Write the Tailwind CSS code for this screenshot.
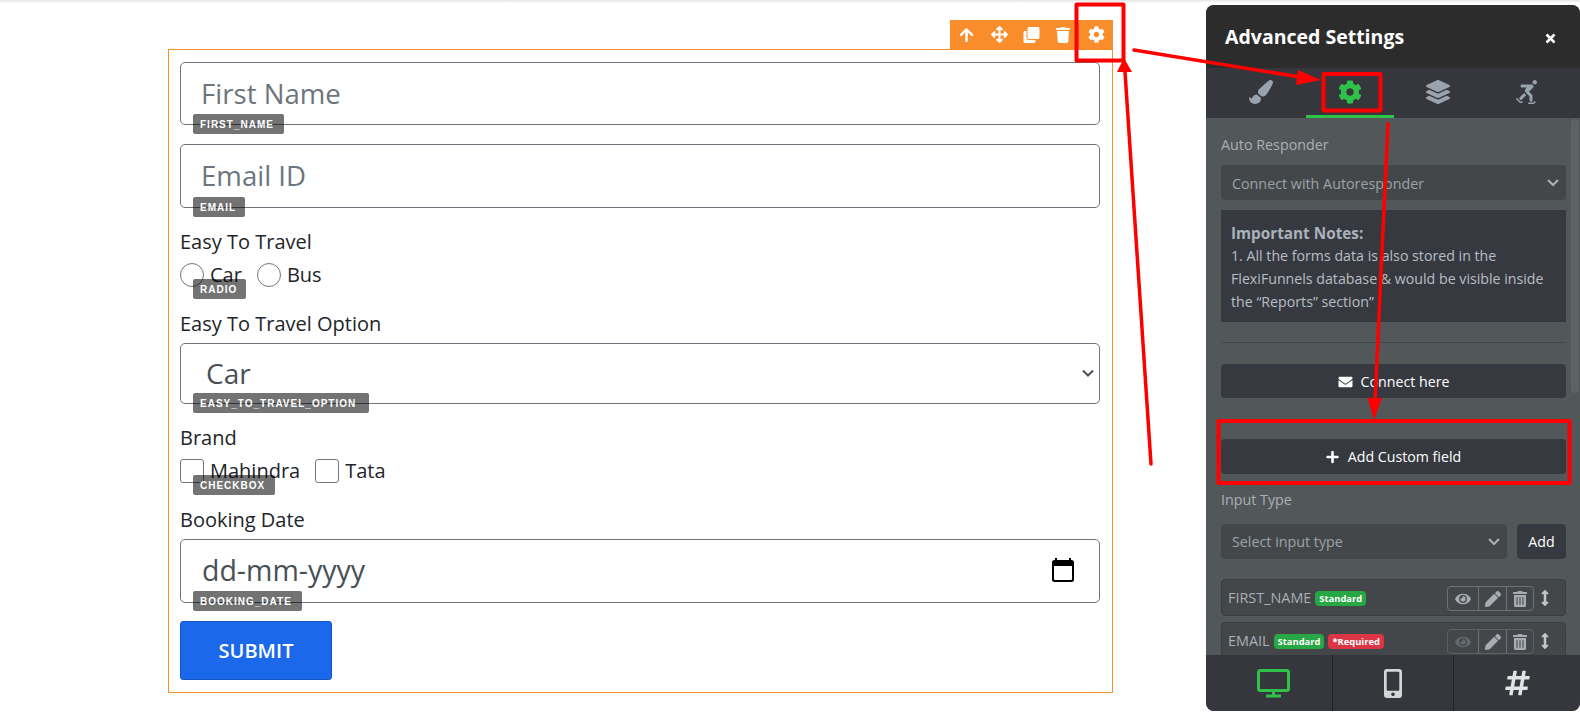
<!DOCTYPE html>
<html lang="en">
  <head>
    <meta charset="UTF-8" />
    <title>Advanced Settings - Form</title>
    <script src="https://cdn.jsdelivr.net/npm/@tailwindcss/browser@4"></script>
  </head>
  <body class="relative h-[718px] w-[1580px] overflow-hidden bg-white font-['Open_Sans',sans-serif] text-[#212529]">
    <div class="h-[3px] bg-gradient-to-b from-[#e4e4e4] to-white"></div>

    <!-- Form block -->
    <main class="ml-[168px] mt-[17px] w-[945px]">
      <div class="ml-auto flex h-[29px] w-[163px] items-center bg-[#f98c2b] text-white">
        <span class="flex w-[33px] justify-center"><svg class="h-[16px] w-[15px] fill-current" viewBox="0 0 448 512"><path d="M34.9 289.5l-22.2-22.2c-9.4-9.4-9.4-24.6 0-33.9L207 39c9.4-9.4 24.6-9.4 33.9 0l194.3 194.3c9.4 9.4 9.4 24.6 0 33.9L413 289.4c-9.5 9.5-25 9.3-34.3-.4L264 168.6V456c0 13.3-10.7 24-24 24h-32c-13.3 0-24-10.7-24-24V168.6L69.2 289.1c-9.3 9.8-24.8 10-34.3.4z"/></svg></span>
        <span class="flex w-[33px] justify-center"><svg class="h-[17px] w-[17px] fill-current" viewBox="0 0 512 512"><path d="M352.201 425.775l-79.196 79.196c-9.373 9.373-24.568 9.373-33.941 0l-79.196-79.196c-15.119-15.119-4.411-40.971 16.971-40.97h51.162L228 284H127.196v51.162c0 21.382-25.851 32.09-40.971 16.971L7.029 272.937c-9.373-9.373-9.373-24.569 0-33.941L86.225 159.8c15.119-15.119 40.971-4.411 40.971 16.971V228H228V127.196h-51.23c-21.382 0-32.09-25.851-16.971-40.971l79.196-79.196c9.373-9.373 24.568-9.373 33.941 0l79.196 79.196c15.119 15.119 4.411 40.971-16.971 40.971h-51.162V228h100.804v-51.162c0-21.382 25.851-32.09 40.97-16.971l79.196 79.196c9.373 9.373 9.373 24.569 0 33.941L425.773 352.2c-15.119 15.119-40.971 4.411-40.97-16.971V284H284v100.804h51.23c21.382 0 32.09 25.851 16.971 40.971z"/></svg></span>
        <span class="flex w-[31px] justify-center"><svg class="h-[16px] w-[17px] fill-current" viewBox="0 0 512 512"><path d="M464 0c26.51 0 48 21.49 48 48v288c0 26.51-21.49 48-48 48H176c-26.51 0-48-21.49-48-48V48c0-26.51 21.49-48 48-48h288M176 416c-44.112 0-80-35.888-80-80V128H48c-26.51 0-48 21.49-48 48v288c0 26.51 21.49 48 48 48h288c26.51 0 48-21.49 48-48v-48H176z"/></svg></span>
        <span class="flex w-[32px] justify-center"><svg class="h-[16px] w-[14px] fill-current" viewBox="0 0 448 512"><path d="M432 32H312l-9.4-18.7A24 24 0 0 0 281.1 0H166.8a23.72 23.72 0 0 0-21.4 13.3L136 32H16A16 16 0 0 0 0 48v32a16 16 0 0 0 16 16h416a16 16 0 0 0 16-16V48a16 16 0 0 0-16-16zM53.2 467a48 48 0 0 0 47.9 45h245.8a48 48 0 0 0 47.9-45L416 128H32z"/></svg></span>
        <span class="flex w-[34px] justify-center"><svg class="h-[17px] w-[17px] fill-current" viewBox="0 0 512 512"><path d="M487.4 315.7l-42.6-24.6c4.3-23.2 4.3-47 0-70.2l42.6-24.6c4.9-2.8 7.1-8.6 5.5-14-11.1-35.6-30-67.8-54.7-94.6-3.8-4.1-10-5.1-14.8-2.3L380.8 110c-17.9-15.4-38.5-27.3-60.8-35.1V25.8c0-5.6-3.9-10.5-9.4-11.7-36.7-8.2-74.3-7.8-109.2 0-5.5 1.2-9.4 6.1-9.4 11.7V75c-22.2 7.9-42.8 19.8-60.8 35.1L88.7 85.5c-4.9-2.8-11-1.9-14.8 2.3-24.7 26.7-43.6 58.9-54.7 94.6-1.7 5.4.6 11.2 5.5 14L67.3 221c-4.3 23.2-4.3 47 0 70.2l-42.6 24.6c-4.9 2.8-7.1 8.6-5.5 14 11.1 35.6 30 67.8 54.7 94.6 3.8 4.1 10 5.1 14.8 2.3l42.6-24.6c17.9 15.4 38.5 27.3 60.8 35.1v49.2c0 5.6 3.9 10.5 9.4 11.7 36.7 8.2 74.3 7.8 109.2 0 5.5-1.2 9.4-6.1 9.4-11.7v-49.2c22.2-7.9 42.8-19.8 60.8-35.1l42.6 24.6c4.9 2.8 11 1.9 14.8-2.3 24.7-26.7 43.6-58.9 54.7-94.6 1.5-5.5-.7-11.3-5.6-14.1zM256 336c-44.1 0-80-35.9-80-80s35.9-80 80-80 80 35.9 80 80-35.9 80-80 80z"/></svg></span>
      </div>

      <form class="h-[644px] border border-[#f98c2b] pl-[11px] pr-[12px] pt-[12px]">
        <div class="relative">
          <input type="text" placeholder="First Name" class="block h-[63px] w-full rounded-[5px] border border-[#6c757d] pb-[2px] pl-[20px] pr-[21px] text-[27.6px] placeholder:text-[#6c757d]" />
          <span class="absolute left-[13px] top-[52px] flex h-[20px] w-[91px] items-center rounded-[2px] bg-black/55 pl-[7px] font-['Liberation_Sans',sans-serif] text-[10px] font-bold tracking-[1px] text-white">FIRST_NAME</span>
        </div>

        <div class="relative mt-[19px]">
          <input type="text" placeholder="Email ID" class="block h-[64px] w-full rounded-[5px] border border-[#6c757d] pb-[2px] pl-[20px] pr-[21px] text-[27.6px] placeholder:text-[#6c757d]" />
          <span class="absolute left-[13px] top-[53px] flex h-[20px] w-[52px] items-center rounded-[2px] bg-black/55 pl-[7px] font-['Liberation_Sans',sans-serif] text-[10px] font-bold tracking-[1px] text-white">EMAIL</span>
        </div>

        <p class="mt-[20px] h-[27px] text-[20px] leading-[27px]">Easy To Travel</p>
        <div class="relative mt-[8px] flex h-[24px] items-center text-[20px]">
          <span class="h-[24px] w-[24px] rounded-full border border-[#767676]"></span>
          <span class="ml-[6px]">Car</span>
          <span class="ml-[15px] h-[24px] w-[24px] rounded-full border border-[#767676]"></span>
          <span class="ml-[6px]">Bus</span>
          <span class="absolute left-[13px] top-[16px] flex h-[20px] w-[53px] items-center rounded-[2px] bg-black/55 pl-[7px] font-['Liberation_Sans',sans-serif] text-[10px] font-bold tracking-[1px] text-white">RADIO</span>
        </div>

        <p class="mt-[23px] h-[27px] text-[20px] leading-[27px]">Easy To Travel Option</p>
        <div class="relative mt-[6px]">
          <select class="block h-[61px] w-full appearance-none rounded-[5px] border border-[#6c757d] bg-white px-[25px] pb-[2px] text-[28px] text-[#495057]">
            <option>Car</option>
          </select>
          <svg class="absolute right-[6px] top-[25px] h-[10px] w-[12px] fill-none stroke-[#495057] stroke-2" viewBox="0 0 12 10"><path d="M1 2.5l5 5 5-5"/></svg>
          <span class="absolute left-[13px] top-[50px] flex h-[20px] w-[176px] items-center rounded-[2px] bg-black/55 pl-[7px] font-['Liberation_Sans',sans-serif] text-[10px] font-bold tracking-[1px] text-white">EASY_TO_TRAVEL_OPTION</span>
        </div>

        <p class="mt-[20px] h-[27px] text-[20px] leading-[27px]">Brand</p>
        <div class="relative mt-[8px] flex h-[24px] items-center text-[20px]">
          <span class="h-[24px] w-[24px] rounded-[3px] border border-[#767676]"></span>
          <span class="ml-[6px]">Mahindra</span>
          <span class="ml-[15px] h-[24px] w-[24px] rounded-[3px] border border-[#767676]"></span>
          <span class="ml-[6px]">Tata</span>
          <span class="absolute left-[13px] top-[16px] flex h-[20px] w-[82px] items-center rounded-[2px] bg-black/55 pl-[7px] font-['Liberation_Sans',sans-serif] text-[10px] font-bold tracking-[1px] text-white">CHECKBOX</span>
        </div>

        <p class="mt-[23px] h-[27px] text-[20px] leading-[27px]">Booking Date</p>
        <div class="relative mt-[6px]">
          <input type="text" value="dd-mm-yyyy" class="block h-[64px] w-full rounded-[5px] border border-[#6c757d] pb-[2px] pl-[21px] pr-[22px] text-[28.5px] text-[#495057]" />
          <svg class="absolute right-[26px] top-[19px] h-[24px] w-[22px] fill-black" viewBox="0 0 22 24"><path d="M5 0v2h12V0h2v2h.5A2.5 2.5 0 0 1 22 4.5v17a2.5 2.5 0 0 1-2.5 2.5h-17A2.5 2.5 0 0 1 0 21.5v-17A2.5 2.5 0 0 1 2.5 2H3V0zM2 8v13a1 1 0 0 0 1 1h16a1 1 0 0 0 1-1V8z"/></svg>
          <span class="absolute left-[13px] top-[52px] flex h-[20px] w-[109px] items-center rounded-[2px] bg-black/55 pl-[7px] font-['Liberation_Sans',sans-serif] text-[10px] font-bold tracking-[1px] text-white">BOOKING_DATE</span>
        </div>

        <button type="button" class="mt-[18px] h-[59px] w-[152px] rounded-[3px] border border-[#1558c4] bg-[#1b68ea] text-[20px] font-semibold text-white">SUBMIT</button>
      </form>
    </main>

    <!-- Advanced settings panel -->
    <aside class="absolute left-[1206px] top-[5px] flex h-[706px] w-[374px] flex-col overflow-hidden rounded-[8px] bg-[#52575a]">
      <header class="flex h-[63px] shrink-0 items-center justify-between bg-[#2c2c2c] pl-[19px] pr-[24px] text-white">
        <h2 class="pt-[1px] text-[19.5px] font-bold">Advanced Settings</h2>
        <svg class="mt-[4px] h-[11px] w-[11px] fill-none stroke-white stroke-[2.6]" viewBox="0 0 11 11"><path d="M1.5 1.5l8 8M9.5 1.5l-8 8"/></svg>
      </header>
      <nav class="flex h-[50px] shrink-0 bg-[#35373c]">
        <span class="flex w-[100px] items-center justify-center pb-[2px] pl-[10px]"><svg class="h-[24px] w-[24px] fill-[#9aa3ad]" viewBox="0 0 512 512"><path d="M167.02 309.34c-40.12 2.58-76.53 17.86-97.19 72.3-2.35 6.21-8 9.98-14.59 9.98-11.11 0-45.46-27.67-55.25-34.35C0 439.62 37.93 512 128 512c75.86 0 128-43.77 128-120.19 0-3.11-.65-6.08-.97-9.13l-88.01-73.34zM457.89 0c-15.16 0-29.37 6.71-40.21 16.45C213.27 199.05 192 203.34 192 257.09c0 13.7 3.25 26.76 8.73 38.7l63.82 53.18c7.21 1.8 14.64 3.03 22.39 3.03 62.11 0 98.11-45.47 211.16-256.46 7.38-14.35 13.9-29.85 13.9-45.99C512 20.64 486 0 457.89 0z"/></svg></span>
        <span class="flex h-[50px] w-[88px] items-center justify-center border-b-[3px] border-[#2fc14a]"><svg class="h-[24px] w-[24px] fill-[#2fc14a]" viewBox="0 0 512 512"><path d="M487.4 315.7l-42.6-24.6c4.3-23.2 4.3-47 0-70.2l42.6-24.6c4.9-2.8 7.1-8.6 5.5-14-11.1-35.6-30-67.8-54.7-94.6-3.8-4.1-10-5.1-14.8-2.3L380.8 110c-17.9-15.4-38.5-27.3-60.8-35.1V25.8c0-5.6-3.9-10.5-9.4-11.7-36.7-8.2-74.3-7.8-109.2 0-5.5 1.2-9.4 6.1-9.4 11.7V75c-22.2 7.9-42.8 19.8-60.8 35.1L88.7 85.5c-4.9-2.8-11-1.9-14.8 2.3-24.7 26.7-43.6 58.9-54.7 94.6-1.7 5.4.6 11.2 5.5 14L67.3 221c-4.3 23.2-4.3 47 0 70.2l-42.6 24.6c-4.9 2.8-7.1 8.6-5.5 14 11.1 35.6 30 67.8 54.7 94.6 3.8 4.1 10 5.1 14.8 2.3l42.6-24.6c17.9 15.4 38.5 27.3 60.8 35.1v49.2c0 5.6 3.9 10.5 9.4 11.7 36.7 8.2 74.3 7.8 109.2 0 5.5-1.2 9.4-6.1 9.4-11.7v-49.2c22.2-7.9 42.8-19.8 60.8-35.1l42.6 24.6c4.9 2.8 11 1.9 14.8-2.3 24.7-26.7 43.6-58.9 54.7-94.6 1.5-5.5-.7-11.3-5.6-14.1zM256 336c-44.1 0-80-35.9-80-80s35.9-80 80-80 80 35.9 80 80-35.9 80-80 80z"/></svg></span>
        <span class="flex w-[88px] items-center justify-center pb-[2px]"><svg class="h-[24px] w-[24px] fill-[#9aa3ad]" viewBox="0 0 512 512"><path d="M12.41 148.02l232.94 105.67c6.8 3.09 14.49 3.09 21.29 0l232.94-105.67c16.55-7.51 16.55-32.52 0-40.03L266.65 2.31a25.607 25.607 0 0 0-21.29 0L12.41 107.98c-16.55 7.51-16.55 32.53 0 40.04zm487.18 88.28l-58.09-26.33-161.64 73.27c-7.56 3.43-15.59 5.17-23.86 5.17s-16.29-1.74-23.86-5.17L70.51 209.97l-58.1 26.33c-16.55 7.5-16.55 32.5 0 40l232.94 105.59c6.8 3.08 14.49 3.08 21.29 0L499.59 276.3c16.55-7.5 16.55-32.5 0-40zm0 127.8l-57.87-26.23-161.86 73.37c-7.56 3.43-15.59 5.17-23.86 5.17s-16.29-1.74-23.86-5.17L70.29 337.87 12.41 364.1c-16.55 7.5-16.55 32.5 0 40l232.94 105.59c6.8 3.08 14.49 3.08 21.29 0L499.59 404.1c16.55-7.5 16.55-32.5 0-40z"/></svg></span>
        <span class="flex w-[88px] items-center justify-center pb-[2px]"><svg class="h-[24px] w-[21px] fill-[#9aa3ad]" viewBox="0 0 448 512"><path d="M400 0c-26.5 0-48 21.5-48 48s21.5 48 48 48 48-21.5 48-48-21.5-48-48-48zm0 448c-8.8 0-16 7.2-16 16s-7.2 16-16 16h-96c-8.8 0-16 7.2-16 16s7.2 16 16 16h96c26.5 0 48-21.5 48-48 0-8.8-7.2-16-16-16zm-282.2 8.6c-6.2 6.2-16.4 6.3-22.6 0l-67.9-67.9c-6.2-6.2-16.4-6.2-22.6 0s-6.2 16.4 0 22.6l67.9 67.9c9.4 9.4 21.7 14 34 14s24.6-4.7 33.9-14c6.2-6.2 6.2-16.4 0-22.6-6.3-6.2-16.4-6.2-22.7 0zm56.1-179.8l-93.7 93.7c-12.5 12.5-12.5 32.8 0 45.2 6.2 6.2 14.4 9.4 22.6 9.4s16.4-3.1 22.6-9.4l91.9-91.9-30.2-30.2c-5-5-9.4-10.7-13.2-16.8zM128 160h105.5l-20.1 17.2c-13.5 11.5-21.6 28.4-22.3 46.1-.7 17.8 6.1 35.2 18.7 47.7l78.2 78.2V432c0 17.7 14.3 32 32 32s32-14.3 32-32v-89.4c0-12.6-5.1-25-14.1-33.9l-61-61c.5-.4 1.2-.6 1.7-1.1l82.3-82.3c11.5-11.5 14.9-28.6 8.7-43.6-6.2-15-20.7-24.7-37-24.7H128c-17.7 0-32 14.3-32 32s14.3 32 32 32z"/></svg></span>
      </nav>

      <div class="relative min-h-0 flex-1 overflow-hidden pl-[15px] pr-[14px]">
        <div class="absolute right-[1px] top-[1px] h-[274px] w-[8px] rounded-[4px] bg-[#5d6265]"></div>
        <p class="mt-[16px] h-[21px] text-[14.3px] leading-[21px] text-[#aab0b5]">Auto Responder</p>
        <div class="relative mt-[10px]">
          <select class="block h-[35px] w-full appearance-none rounded-[4px] bg-[#43474a] px-[11px] pt-[2px] text-[14.3px] text-[#9ca3a8]">
            <option>Connect with Autoresponder</option>
          </select>
          <svg class="absolute right-[7px] top-[13px] h-[9px] w-[12px] fill-none stroke-[#aab0b5] stroke-2" viewBox="0 0 12 9"><path d="M1 2l5 5 5-5"/></svg>
        </div>
        <div class="mt-[10px] h-[112px] bg-[#363940] pl-[10px] pr-[8px] pt-[13px] text-[14.2px] leading-[23px] text-[#b9bec4]">
          <strong class="block h-[21px] text-[15.3px] font-bold leading-[21px] text-[#aab2ba]">Important Notes:</strong>
          1. All the forms data is also stored in the<br />
          FlexiFunnels database &amp; would be visible inside<br />
          the “Reports” section”
        </div>
        <div class="mt-[20px] border-t border-[#44484c]"></div>
        <button type="button" class="mt-[21px] flex h-[34px] w-full items-center justify-center gap-[8px] rounded-[4px] bg-[#363940] pt-[1px] text-[14.2px] text-white">
          <svg class="h-[14px] w-[15px] fill-white" viewBox="0 0 512 512"><path d="M502.3 190.8c3.9-3.1 9.7-.2 9.7 4.7V400c0 26.5-21.5 48-48 48H48c-26.5 0-48-21.5-48-48V195.6c0-5 5.7-7.8 9.7-4.7 22.4 17.4 52.1 39.5 154.1 113.6 21.1 15.4 56.7 47.8 92.2 47.6 35.7.3 72-32.8 92.3-47.6 102-74.1 131.6-96.3 154-113.7zM256 320c23.2.4 56.6-29.2 73.4-41.4 132.7-96.3 142.8-104.7 173.4-128.7 5.8-4.5 9.2-11.5 9.2-18.9v-19c0-26.5-21.5-48-48-48H48C21.5 64 0 85.5 0 112v19c0 7.4 3.4 14.3 9.2 18.9 30.6 23.9 40.7 32.4 173.4 128.7 16.8 12.2 50.2 41.8 73.4 41.4z"/></svg>
          Connect here
        </button>
        <button type="button" class="mt-[41px] flex h-[35px] w-full items-center justify-center gap-[9px] rounded-[4px] bg-[#363940] text-[14.2px] text-white">
          <svg class="h-[14px] w-[13px] fill-white" viewBox="0 0 448 512"><path d="M416 208H272V64c0-17.67-14.33-32-32-32h-32c-17.67 0-32 14.33-32 32v144H32c-17.67 0-32 14.33-32 32v32c0 17.67 14.33 32 32 32h144v144c0 17.67 14.33 32 32 32h32c17.67 0 32-14.33 32-32V304h144c17.67 0 32-14.33 32-32v-32c0-17.67-14.33-32-32-32z"/></svg>
          Add Custom field
        </button>
        <p class="mt-[15px] h-[21px] text-[14.3px] leading-[21px] text-[#aab0b5]">Input Type</p>
        <div class="mt-[14px] flex gap-[10px]">
          <div class="relative flex-1">
            <select class="block h-[35px] w-full appearance-none rounded-[4px] bg-[#43474a] px-[11px] text-[14.3px] text-[#9ca3a8]">
              <option>Select input type</option>
            </select>
            <svg class="absolute right-[7px] top-[13px] h-[9px] w-[12px] fill-none stroke-[#aab0b5] stroke-2" viewBox="0 0 12 9"><path d="M1 2l5 5 5-5"/></svg>
          </div>
          <button type="button" class="h-[35px] w-[49px] rounded-[4px] bg-[#363940] text-[14.2px] text-white">Add</button>
        </div>

        <div class="mt-[20px] flex h-[37px] items-center rounded-[4px] border border-[#393c40] bg-[#43474a] pl-[6px] pr-[16px] text-[14.4px] text-[#aab0b5]">
          <span>FIRST_NAME</span>
          <span class="ml-[4px] mt-[2px] rounded-[4px] bg-[#28a745] px-[4px] text-[9.4px] font-bold leading-[15px] text-white">Standard</span>
          <span class="ml-auto mt-[2px] flex h-[25px] items-stretch rounded-[4px] border border-[#6c7277]">
            <span class="flex w-[30px] items-center justify-center"><svg class="h-[14px] w-[18px] fill-[#a7adb2]" viewBox="0 0 576 512"><path d="M572.52 241.4C518.29 135.59 410.93 64 288 64S57.68 135.64 3.48 241.41a32.35 32.35 0 0 0 0 29.19C57.71 376.41 165.07 448 288 448s230.32-71.64 284.52-177.41a32.35 32.35 0 0 0 0-29.19zM288 400a144 144 0 1 1 144-144 143.93 143.93 0 0 1-144 144zm0-240a95.31 95.31 0 0 0-25.31 3.79 47.85 47.85 0 0 1-66.9 66.9A95.78 95.78 0 1 0 288 160z"/></svg></span>
            <span class="flex w-[28px] items-center justify-center border-l border-[#6c7277]"><svg class="h-[16px] w-[16px] fill-[#a7adb2]" viewBox="0 0 512 512"><path d="M497.9 142.1l-46.1 46.1c-4.7 4.7-12.3 4.7-17 0l-111-111c-4.7-4.7-4.7-12.3 0-17l46.1-46.1c18.7-18.7 49.1-18.7 67.9 0l60.1 60.1c18.8 18.7 18.8 49.1 0 67.9zM284.2 99.8L21.6 362.4.4 483.9c-2.9 16.4 11.4 30.6 27.8 27.8l121.5-21.3 262.6-262.6c4.7-4.7 4.7-12.3 0-17l-111-111c-4.8-4.7-12.4-4.7-17.1 0z"/></svg></span>
            <span class="flex w-[27px] items-center justify-center border-l border-[#6c7277]"><svg class="h-[16px] w-[14px] fill-[#a7adb2]" viewBox="0 0 448 512"><path d="M32 464a48 48 0 0 0 48 48h288a48 48 0 0 0 48-48V128H32zm272-256a16 16 0 0 1 32 0v224a16 16 0 0 1-32 0zm-96 0a16 16 0 0 1 32 0v224a16 16 0 0 1-32 0zm-96 0a16 16 0 0 1 32 0v224a16 16 0 0 1-32 0zM432 32H312l-9.4-18.7A24 24 0 0 0 281.1 0H166.8a23.72 23.72 0 0 0-21.4 13.3L136 32H16A16 16 0 0 0 0 48v32a16 16 0 0 0 16 16h416a16 16 0 0 0 16-16V48a16 16 0 0 0-16-16z"/></svg></span>
          </span>
          <svg class="ml-[7px] h-[16px] w-[8px] fill-[#c0c5c9]" viewBox="0 0 256 512"><path d="M214.059 377.941H168V134.059h46.059c21.382 0 32.09-25.851 16.971-40.971L144.971 7.029c-9.373-9.373-24.569-9.373-33.941 0L24.971 93.088c-15.119 15.119-4.411 40.971 16.971 40.971H88v243.882H41.941c-21.382 0-32.09 25.851-16.971 40.971l86.059 86.059c9.373 9.373 24.569 9.373 33.941 0l86.059-86.059c15.12-15.119 4.412-40.971-16.97-40.971z"/></svg>
        </div>
        <div class="mt-[6px] flex h-[37px] items-center rounded-[4px] border border-[#393c40] bg-[#43474a] pl-[6px] pr-[16px] text-[14.4px] text-[#aab0b5]">
          <span>EMAIL</span>
          <span class="ml-[4px] mt-[2px] rounded-[4px] bg-[#28a745] px-[4px] text-[9.4px] font-bold leading-[15px] text-white">Standard</span>
          <span class="ml-[4px] mt-[2px] rounded-[4px] bg-[#dc3545] px-[4px] text-[9.4px] font-bold leading-[15px] text-white">*Required</span>
          <span class="ml-auto mt-[2px] flex h-[25px] items-stretch rounded-[4px] border border-[#5b6064]">
            <span class="flex w-[30px] items-center justify-center"><svg class="h-[14px] w-[18px] fill-[#666b6f]" viewBox="0 0 576 512"><path d="M572.52 241.4C518.29 135.59 410.93 64 288 64S57.68 135.64 3.48 241.41a32.35 32.35 0 0 0 0 29.19C57.71 376.41 165.07 448 288 448s230.32-71.64 284.52-177.41a32.35 32.35 0 0 0 0-29.19zM288 400a144 144 0 1 1 144-144 143.93 143.93 0 0 1-144 144zm0-240a95.31 95.31 0 0 0-25.31 3.79 47.85 47.85 0 0 1-66.9 66.9A95.78 95.78 0 1 0 288 160z"/></svg></span>
            <span class="flex w-[28px] items-center justify-center border-l border-[#6c7277]"><svg class="h-[16px] w-[16px] fill-[#a7adb2]" viewBox="0 0 512 512"><path d="M497.9 142.1l-46.1 46.1c-4.7 4.7-12.3 4.7-17 0l-111-111c-4.7-4.7-4.7-12.3 0-17l46.1-46.1c18.7-18.7 49.1-18.7 67.9 0l60.1 60.1c18.8 18.7 18.8 49.1 0 67.9zM284.2 99.8L21.6 362.4.4 483.9c-2.9 16.4 11.4 30.6 27.8 27.8l121.5-21.3 262.6-262.6c4.7-4.7 4.7-12.3 0-17l-111-111c-4.8-4.7-12.4-4.7-17.1 0z"/></svg></span>
            <span class="flex w-[27px] items-center justify-center border-l border-[#6c7277]"><svg class="h-[16px] w-[14px] fill-[#a7adb2]" viewBox="0 0 448 512"><path d="M32 464a48 48 0 0 0 48 48h288a48 48 0 0 0 48-48V128H32zm272-256a16 16 0 0 1 32 0v224a16 16 0 0 1-32 0zm-96 0a16 16 0 0 1 32 0v224a16 16 0 0 1-32 0zm-96 0a16 16 0 0 1 32 0v224a16 16 0 0 1-32 0zM432 32H312l-9.4-18.7A24 24 0 0 0 281.1 0H166.8a23.72 23.72 0 0 0-21.4 13.3L136 32H16A16 16 0 0 0 0 48v32a16 16 0 0 0 16 16h416a16 16 0 0 0 16-16V48a16 16 0 0 0-16-16z"/></svg></span>
          </span>
          <svg class="ml-[7px] h-[16px] w-[8px] fill-[#c0c5c9]" viewBox="0 0 256 512"><path d="M214.059 377.941H168V134.059h46.059c21.382 0 32.09-25.851 16.971-40.971L144.971 7.029c-9.373-9.373-24.569-9.373-33.941 0L24.971 93.088c-15.119 15.119-4.411 40.971 16.971 40.971H88v243.882H41.941c-21.382 0-32.09 25.851-16.971 40.971l86.059 86.059c9.373 9.373 24.569 9.373 33.941 0l86.059-86.059c15.12-15.119 4.412-40.971-16.97-40.971z"/></svg>
        </div>
      </div>

      <footer class="flex h-[56px] shrink-0 bg-[#35373c]">
        <span class="flex w-[126px] items-center justify-center pl-[8px]"><svg class="h-[29px] w-[33px] fill-none stroke-[#2fc14a]" viewBox="0 0 33 29"><rect x="1.5" y="1.5" width="30" height="20" rx="2" stroke-width="3"/><path d="M16.5 22v4M9 27h15" stroke-width="3"/></svg></span>
        <span class="flex w-[121px] items-center justify-center border-l border-[#212226]"><svg class="h-[29px] w-[18px] fill-[#d4d5d6]" viewBox="0 0 320 512"><path d="M272 0H48C21.5 0 0 21.5 0 48v416c0 26.5 21.5 48 48 48h224c26.5 0 48-21.5 48-48V48c0-26.5-21.5-48-48-48zM160 480c-17.7 0-32-14.3-32-32s14.3-32 32-32 32 14.3 32 32-14.3 32-32 32zm112-108c0 6.6-5.4 12-12 12H60c-6.6 0-12-5.4-12-12V60c0-6.6 5.4-12 12-12h200c6.6 0 12 5.4 12 12v312z"/></svg></span>
        <span class="flex flex-1 items-center justify-center border-l border-[#212226]"><svg class="h-[28px] w-[25px] fill-[#e2e3e4]" viewBox="0 0 448 512"><path d="M440.667 182.109l7.143-40c1.313-7.355-4.342-14.109-11.813-14.109h-74.81l14.623-81.891C377.123 38.754 371.468 32 363.997 32h-40.632a12 12 0 0 0-11.813 9.891L296.175 128H197.54l14.623-81.891C213.477 38.754 207.822 32 200.35 32h-40.632a12 12 0 0 0-11.813 9.891L132.528 128H53.432a12 12 0 0 0-11.813 9.891l-7.143 40C33.163 185.246 38.818 192 46.289 192h74.81L98.242 320H19.146a12 12 0 0 0-11.813 9.891l-7.143 40C-1.123 377.246 4.532 384 12.003 384h74.81L72.19 465.891C70.877 473.246 76.532 480 84.003 480h40.632a12 12 0 0 0 11.813-9.891L151.826 384h98.634l-14.623 81.891C234.523 473.246 240.178 480 247.65 480h40.632a12 12 0 0 0 11.813-9.891L315.472 384h79.096a12 12 0 0 0 11.813-9.891l7.143-40c1.313-7.355-4.342-14.109-11.813-14.109h-74.81l22.857-128h79.096a12 12 0 0 0 11.813-9.891zM261.889 320h-98.634l22.857-128h98.634l-22.857 128z"/></svg></span>
      </footer>
    </aside>

    <!-- Red annotations laid over the screenshot -->
    <svg class="pointer-events-none absolute left-0 top-0 h-[718px] w-[1580px]" viewBox="0 0 1580 718">
      <g fill="none" stroke="#ff0000" stroke-width="4" stroke-linejoin="round">
        <rect x="1076.5" y="4.5" width="47" height="56"/>
        <rect x="1323.5" y="74" width="57" height="36.5"/>
        <rect x="1218.5" y="421" width="351" height="62"/>
      </g>
      <g stroke="#ff0000" stroke-width="3.5" stroke-linecap="round" fill="none">
        <path d="M1134 50L1300 77"/>
        <path d="M1388 124L1375 402"/>
        <path d="M1151 464L1125 72"/>
      </g>
      <g fill="#ff0000">
        <path d="M1321 80L1296 85L1298 70Z"/>
        <path d="M1374 420L1367.5 398H1382Z"/>
        <path d="M1124 58L1132 72H1117Z"/>
      </g>
    </svg>
  </body>
</html>
